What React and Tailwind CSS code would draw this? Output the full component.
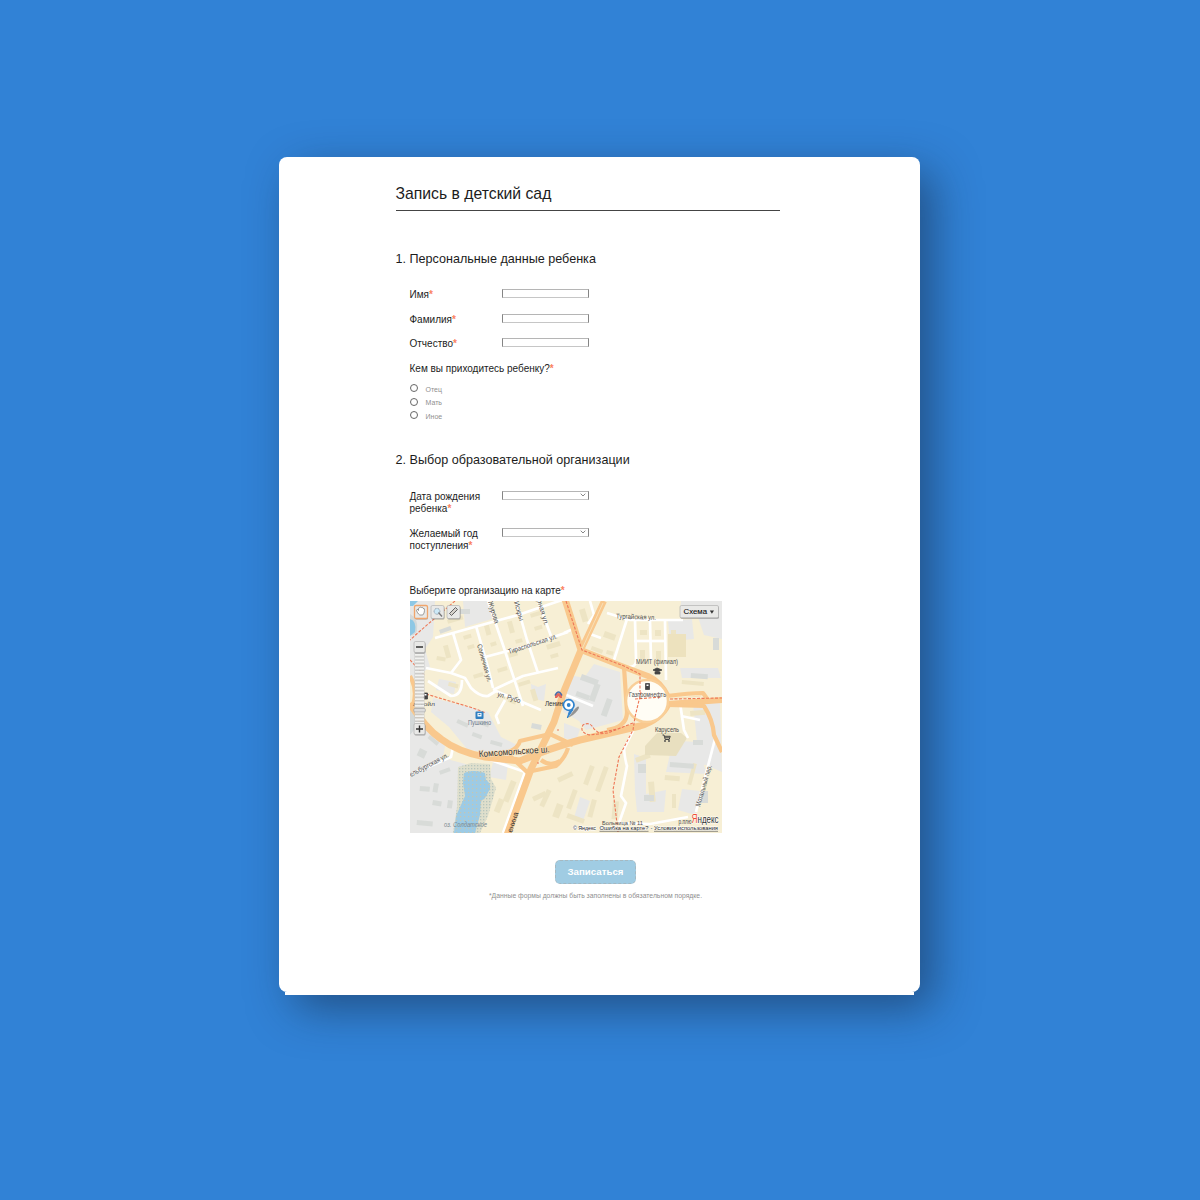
const W = 'stroke-white fill-none';
const whiteRoads = [
  'M435 638L518 615L562 600', 'M476 626L487 664L493 688', 'M488 601L503 645L523 706', 'M485 657L530 645L568 632',
  'M516 601L527 640L538 673', 'M538 601L551 636', 'M493 690L523 676L558 668', 'M453 633L461 660L451 673',
  'M426 668L451 673L465 678L471 688Q480 697 488 696L496 691L541 710', 'M428 681L451 696Q462 696 462 680',
  'M590 601L594 615L588 624', 'M564 633L573 629', 'M607 613L630 620L665 620L683 620', 'M635 620L636 658Q637 667 629 667',
  'M650 621L651 660', 'M665 620L666 680', 'M634 641L664 641', 'M627 619L614 660', 'M590 634L601 638',
  'M505 700L496 716L499 724', 'M564 694L593 706', 'M410 775L451 757L453 747L525 772L503 833', 'M680 703L684 730L688 738', 'M681 716L700 720',
  'M634 729L624 749Q625 760 627 766L621 796L626 803L619 823', 'M715 739L696 812', 'M619 823L650 824L688 817',
];
const orangeRoads = [
  'M564 596L581 650L564 691L554 722L531 769L506 838', 'M604 601L581 650L624 667L648 676Q661 682 668 697',
  'M410 703Q425 728 441 739Q458 752 485 757L520 761Q550 748 580 740L640 726Q660 720 668 704', 'M668 704L722 700', 'M667 696Q690 693 703 693L708 700',
  'M624 667L627 712Q627 727 607 730', 'M668 705L704 706Q713 720 714 735L722 752', 'M485 757Q517 754 520 741L550 734L573 745',
  'M509 755L527 772L556 766Q565 758 568 748', 'M541 760Q550 767 560 761', 'M410 676Q418 690 413 705',
];
const blocks = [
  [447,620,16,4,-17],[443,646,5,13,-15],[463,636,8,4,-17],[467,646,7,4,-17],[437,656,9,4,10],[484,626,5,10,-15],[490,643,6,4,-17],[507,622,5,12,-15],[515,640,7,4,-15],[530,614,10,4,-17],[534,627,8,4,-17],[546,645,14,5,-17],[550,655,8,4,-17],[508,653,9,5,-17],[497,669,10,4,-17],[518,683,12,4,-17],[530,690,5,12,-17],[449,682,10,4,15],[473,675,10,4,-17],[509,698,8,4,20],[579,610,6,13,-17],[592,646,12,4,20],[605,631,12,6,20],[607,650,7,4,15],[640,630,7,5,0],[655,630,6,6,0],[640,650,5,9,0],[656,651,5,9,0],[671,630,5,15,0],[682,680,22,4,5],[690,711,15,5,-5],[557,778,16,5,-25],[547,789,5,18,25],[573,789,5,20,20],[568,813,18,5,20],[592,799,5,18,15],[604,766,5,26,20],[590,765,5,20,20],[613,801,6,18,5],[532,797,14,5,-25],[557,803,7,14,20],[511,780,6,22,22],[499,798,6,14,22],[648,782,6,20,-5],[665,775,15,5,5],[672,794,4,14,0],[693,763,4,22,15],[703,781,5,20,15],[635,758,15,5,-20],
];
const greyBlocks = [
  [582,674,18,6,20],[595,683,6,18,20],[577,691,14,5,20],[607,698,6,18,20],[458,719,12,4,25],[473,732,10,4,20],[491,740,12,4,15],[430,735,12,4,40],[420,748,8,8,25],[439,771,11,4,-20],[420,786,10,5,5],[433,800,9,5,10],[448,800,5,8,8],[417,820,16,5,5],[434,783,5,9,10],[482,721,8,4,20],[638,764,8,9,0],[644,795,10,6,0],[670,762,24,5,4],[693,740,10,5,0],[700,791,8,12,0],[691,673,17,5,4],[688,606,13,10,0],[713,638,6,12,0],[439,630,12,4,-20],[460,609,10,5,0],[532,723,10,5,12],
];
const Road = ({ d, w, c }) => <path d={d} fill="none" stroke={c} strokeWidth={w} strokeLinejoin="round" />;
const T = ({ x, y, w, s = 6, r = 0, c = '#4c4c4c', children, ...p }) => (
  <text x={x} y={y} fontSize={s} fill={c} textLength={w} lengthAdjust="spacingAndGlyphs" transform={`rotate(${r} ${x} ${y})`} {...p}>{children}</text>
);
const Button = ({ x, y, w = 13, h = 13, active }) => (
  <g><rect x={x + 0.5} y={y + 1} width={w} height={h} rx="1.5" fill="#777" opacity=".6" />
    <rect x={x} y={y} width={w} height={h} rx="1.5" fill="#e9e9e7" stroke={active ? '#f0a56c' : '#aaa'} strokeWidth={active ? 1.3 : 0.6} /></g>
);

function CityMap() {
  return (
    <svg viewBox="410 601 312 232" className="block h-[232px] w-[312px] font-['Liberation_Sans',sans-serif]">
      <defs>
        <pattern id="dots" width="3" height="3" patternUnits="userSpaceOnUse"><rect width="3" height="3" fill="#dfdfcc" /><rect width="1.3" height="1.3" fill="#b7c5bd" /></pattern>
        <pattern id="water" width="4" height="4" patternUnits="userSpaceOnUse"><rect width="4" height="4" fill="#9dcbe5" /><rect width="1.2" height="1.2" fill="#c7c5b0" /></pattern>
      </defs>
      <rect x="410" y="601" width="312" height="232" fill="#f7efd5" />
      <g fill="#e8e8e7">
        <path d="M410 601h25l-2 36l-8 12l5 18l-20 15zM463 601h26l3 18l-27 8zM410 712l18 20l17 14l-2 12l30 8l-15 67h-48z" />
        <path d="M433 698l55 14l13 25l16 8l-10 13l-40-9l-18-22l-18-15zM439 679l17 3l-2 12l-18-4zM494 759l14 5l-2 16l-17-3zM531 684l7 3l8-3l-2 17l-12-3z" />
        <path d="M594 664l26 8l3 48l-37 10l-7-9l-16-9l7-37l14 3z" />
        <path d="M681 601h41v38l-18-4l-6-18l-18-3zM668 621l24-2l2 20l-24 2zM680 668h38l3 10h-39zM693 703l27-1l2 70l-16-7l-34-3l8-21l17 1zM634 754l12 4v36l20-4l-2 22h-27l-2-20z" />
        <path d="M670 754h30l7 20l-41-2zM682 789l18 2l-5 24l-17-5zM580 797l10 4l-7 20l-9-3zM564 723l16 6l-4 12l-12-3z" />
      </g>
      <path d="M410 704Q423 721 410 735zM410 614q9 5 7 17q-2 5-7 4z" fill="#d4d9d9" />
      <path d="M410 619q7 2 5 13l-5 4zM410 601h8l-5 5h-3z" fill="#8ec8e5" />
      <g fill="#ede4c4">{blocks.map(([x, y, w, h, r]) => <rect key={`${x}-${y}`} x={x} y={y} width={w} height={h} transform={`rotate(${r} ${x} ${y})`} />)}</g>
      <g fill="#d8dbd8">{greyBlocks.map(([x, y, w, h, r]) => <rect key={`${x}-${y}`} x={x} y={y} width={w} height={h} transform={`rotate(${r} ${x} ${y})`} />)}</g>
      <path d="M645 746l12-13h24l6 5l-11 18l-31-1z" fill="#e8dfbf" />
      <path d="M668 634h18v23h-18z" fill="#ede2be" />
      <path d="M458 767l13-4l19 1l1 15l5 9l-8 28l-8 17h-27l4-26z" fill="url(#dots)" />
      <path d="M464 773q9-4 21 0l1 7q5 3 4 9l-5 9l-4 3l-1 14l-5 18h-21l2-17l9-20l-2-13z" fill="url(#water)" />
      {whiteRoads.map((d) => <path key={d} d={d} className={W} strokeWidth="2.7" strokeLinejoin="round" />)}
      {orangeRoads.map((d, i) => <Road key={d} d={d} w={[0, 2].includes(i) ? 7 : i === 1 || i === 3 ? 6 : 4.2} c="#f9c88d" />)}
      <circle cx="647" cy="701" r="21" fill="#fffdf5" stroke="#f9cf98" strokeWidth="2.5" />
      <path d="M603 603L582 649M669 699L701 696" stroke="#f7e0b8" strokeWidth="1" fill="none" />
      <g fill="none" stroke="#ee7857" strokeWidth="1.1" strokeDasharray="3 1.5">
        <path d="M566 601L582 650L624 666L640 674V692M641 692L635 717L633 730L619 757L613 790L618 832M635 699L662 697M670 699L722 698" />
        <path d="M426 694L473 708L486 713M455 601L420 631L410 640M410 660l14 15" />
        <path d="M633 723L608 733L589 735Q579 732 583 725Q590 721 594 729L599 733L622 728" />
      </g>
      <g fill="#e96a4e"><circle cx="558" cy="730" r=".8" /><circle cx="538" cy="763" r=".8" /><circle cx="521" cy="754" r=".8" /></g>

      <T x={488} y={602} w={23} r={73} s={7}>Журова</T><T x={514} y={602} w={20} r={74} s={7}>Искры</T><T x={537} y={600} w={27} r={74} s={7}>рная ул.</T>
      <T x={477} y={645} w={39} r={74} s={7}>Солнечная ул.</T><T x={509} y={654} w={51} r={-18} s={7}>Тираспольская ул.</T>
      <T x={497} y={696} w={24} r={18} s={7}>ул. Рубо</T><T x={616} y={618.5} w={40} r={2} s={7}>Тургайская ул.</T>
      <T x={636} y={664} w={42} s={6.5}>МИИТ (филиал)</T><T x={629} y={697} w={37} s={6.5}>Газпромнефть</T><T x={655} y={731.5} w={24} s={6.5}>Карусель</T>
      <T x={545} y={705.5} w={18} s={6.3} c="#333">Ленин</T><T x={468} y={724.5} w={23} s={6.5} c="#6c7a8b">Пушкино</T><T x={413} y={706} w={22}>лукойл</T>
      <T x={479} y={757} w={71} s={9} r={-4} c="#333" stroke="#f9dfb9" strokeWidth="1.2" paintOrder="stroke">Комсомольское ш.</T>
      <T x={411} y={777} w={43} r={-28} s={7}>ельбургская ул.</T><T x={512} y={833} w={21} r={-72} s={7.5} c="#333">енина</T>
      <T x={444} y={826.5} w={43} s={6.5} c="#7c8a91" fontStyle="italic">оз. Солдатское</T><T x={700} y={807} w={43} r={-74} s={7}>Мотальный пер.</T>
      <T x={602} y={825} w={41}>Больница № 11</T><T x={678.5} y={823.5} w={13} s={7}>р.плю</T>

      <g fill="#444"><path d="M653 670l4-2l5 2l-5 2zM655 672h5v2h-5zM645.5 683.5h4v6h-4zM423.5 693h4v6h-4z" stroke="#444" strokeWidth=".8" /><circle cx="665" cy="741" r=".9" /><circle cx="669" cy="741" r=".9" /><path d="M646.5 684.5h2v1.5h-2zM424.5 694h2v1.5h-2z" fill="white" /></g>
      <path d="M662.5 735h1.5l1.2 4.5h4l1-3.2h-5.5M665 737.8h4.5" fill="none" stroke="#444" strokeWidth="1" />
      <rect x="475.5" y="711.5" width="8" height="7.5" rx="1" fill="#2f7fc1" /><path d="M477.5 713h4v3.5h-4z" fill="white" /><path d="M478.5 713.8h2v1.3h-2z" fill="#2f7fc1" />
      <path d="M555 698v-3q3-4 7 0v3h-2l-1.5-2l-1.5 2z" fill="#e4685b" /><path d="M555 695.5q3.5-7 7 0" fill="none" stroke="#456dab" strokeWidth="1.5" />
      <path d="M568 718l6-8q4-5 5-3q0 3-6 8z" fill="#777" opacity=".75" />
      <path d="M567.3 718L569.3 711.5L573 709.5z" fill="#2f82cc" stroke="#2f82cc" /><circle cx="568.7" cy="705" r="5.3" fill="white" stroke="#2f82cc" strokeWidth="1.7" /><circle cx="568.7" cy="705" r="1.9" fill="#2f82cc" />

      <Button x={414.5} y={605.5} active /><Button x={431} y={605.5} /><Button x={447} y={605.5} />
      <path d="M418.5 614q-3-4-1.5-4.5q1-.5 1.5 1q-.5-3 1-2.7q.5-1.5 1.8-.3q1.5-.7 1.7.8q1.8-.2 1.5 2q0 3-1.7 4.7h-3z" fill="white" stroke="#777" strokeWidth=".7" />
      <circle cx="437" cy="611.3" r="2.9" fill="#cce8f6" stroke="#789" strokeWidth=".8" strokeDasharray="1 .6" /><path d="M438.5 612.5l3.5 4" stroke="#777" strokeWidth="1.4" />
      <path d="M449.5 613.5l6-6l2 2l-6 6z" fill="#d5d1cb" stroke="#555" strokeWidth=".9" />
      <rect x="414.5" y="653" width="10" height="72" fill="#c9c9c7" opacity=".9" />
      <path d="M419.5 654v71" stroke="#f2f2f0" strokeWidth="9" strokeDasharray="1.8 1.6" />
      <rect x="413.8" y="708.5" width="11.5" height="3.5" rx="1" fill="#ddd" stroke="#999" strokeWidth=".6" />
      <Button x={414} y={641.5} w={11} h={11} /><Button x={414} y={723.5} w={11} h={11} />
      <path d="M416 647h7M416 729h7M419.5 725.5v7" stroke="#333" strokeWidth="1.4" />
      <Button x={680} y={605.5} w={38.5} h={12.3} />
      <T x={683.5} y={614.4} w={23.5} s={7.7} c="#111" stroke="#111" strokeWidth=".1">Схема</T><path d="M709.8 610.5h4.2l-2.1 3.2z" fill="#333" />
      <g stroke="white" strokeWidth="1" style={{ paintOrder: 'stroke' }}>
        <T x={573} y={830} w={23} s={6.2} c="#222">© Яндекс</T>
        <T x={599.5} y={830} w={49} s={6.2} c="#222">Ошибка на карте?</T><T x={650.5} y={830} w={2} s={6.2} c="#222">-</T>
        <T x={654} y={830} w={64} s={6.2} c="#222">Условия использования</T>
        <T x={691.5} y={822.5} w={6} s={12.5} c="#ef4f35">Я</T><T x={697.5} y={822.5} w={21} s={11.5} c="#333">ндекс</T>
      </g>
      <path d="M599.5 831.3h49M654 831.3h64" stroke="#444" strokeWidth=".6" />
    </svg>
  );
}

const Star = () => <span className="font-bold text-[#fa8260]">*</span>;
const Box = ({ select }) => (
  <div className="flex h-[9px] w-[87px] items-center justify-end border-x border-y border-x-[#858585] border-t-[#b5b5b5] border-b-[#c6c6c6] bg-white pr-[2px]">
    {select && <svg viewBox="0 0 6 4" className="h-1 w-1.5 fill-none stroke-[#888]"><path d="M.7 .7L3 3L5.3 .7" /></svg>}
  </div>
);
const Field = ({ label, select, className }) => (
  <label className={`flex items-start ${className}`}>
    <span className="w-[92px] whitespace-pre text-[10px] leading-[12px]">{label}<Star /></span>
    <Box select={select} />
  </label>
);

export default function App() {
  return (
    <main className="h-[1200px] w-[1200px] overflow-hidden bg-[#3182d6] pt-[157px] font-['Liberation_Sans',Arial,sans-serif] text-[#1c1c1c]">
      <div className="ml-[279px] w-[641px] rounded-[18px] shadow-[14px_14px_44px_rgba(20,35,60,0.5)]">
        <div className="h-[835px] rounded-lg bg-white pl-[116.5px] pt-[27px]">
          <h1 className="h-[27px] w-[384px] whitespace-nowrap border-b border-[#444] text-[15.75px] leading-[20px]">Запись в детский сад</h1>
          <h2 className="mt-[40px] whitespace-nowrap text-[12.6px] leading-[16px]">1. Персональные данные ребенка</h2>
          <div className="pl-[14px] pt-[22px]">
            <Field label="Имя" className="h-[24.5px]" />
            <Field label="Фамилия" className="h-[24.5px]" />
            <Field label="Отчество" className="h-[24.5px]" />
            <p className="whitespace-nowrap text-[10px] leading-[12px]">Кем вы приходитесь ребенку?<Star /></p>
            <div className="mt-[8px]">
              {['Отец', 'Мать', 'Иное'].map((t) => (
                <label key={t} className="flex h-[13.6px] items-center gap-[8px] text-[7px] leading-[12px] text-[#8f8f8f]">
                  <span className="mt-[-2px] h-2 w-2 rounded-full border border-[#666]" /><span className="pt-px">{t}</span>
                </label>
              ))}
            </div>
          </div>
          <h2 className="mt-[28.9px] whitespace-nowrap text-[12.6px] leading-[16px]">2. Выбор образовательной организации</h2>
          <div className="pl-[14px] pt-[22.8px]">
            <Field select label={'Дата рождения\nребенка'} className="h-[37px]" />
            <Field select label={'Желаемый год\nпоступления'} className="h-[37px]" />
            <p className="mt-[20px] whitespace-nowrap text-[10px] leading-[12px]">Выберите организацию на карте<Star /></p>
            <div className="mt-[4px]"><CityMap /></div>
          </div>
          <div className="mt-[27px] flex w-[400px] flex-col items-center">
            <button className="h-[24px] w-[81px] rounded-[5px] border border-dashed border-[#a5b9c2] bg-[#a0cce3] text-[9.7px] font-bold leading-[20px] text-white">Записаться</button>
            <p className="mt-[7px] whitespace-nowrap text-[6.8px] leading-[10px] text-[#8f8f8f]">*Данные формы должны быть заполнены в обязательном порядке.</p>
          </div>
        </div>
        <div className="mx-[6px] h-[3px] bg-white" />
      </div>
    </main>
  );
}
